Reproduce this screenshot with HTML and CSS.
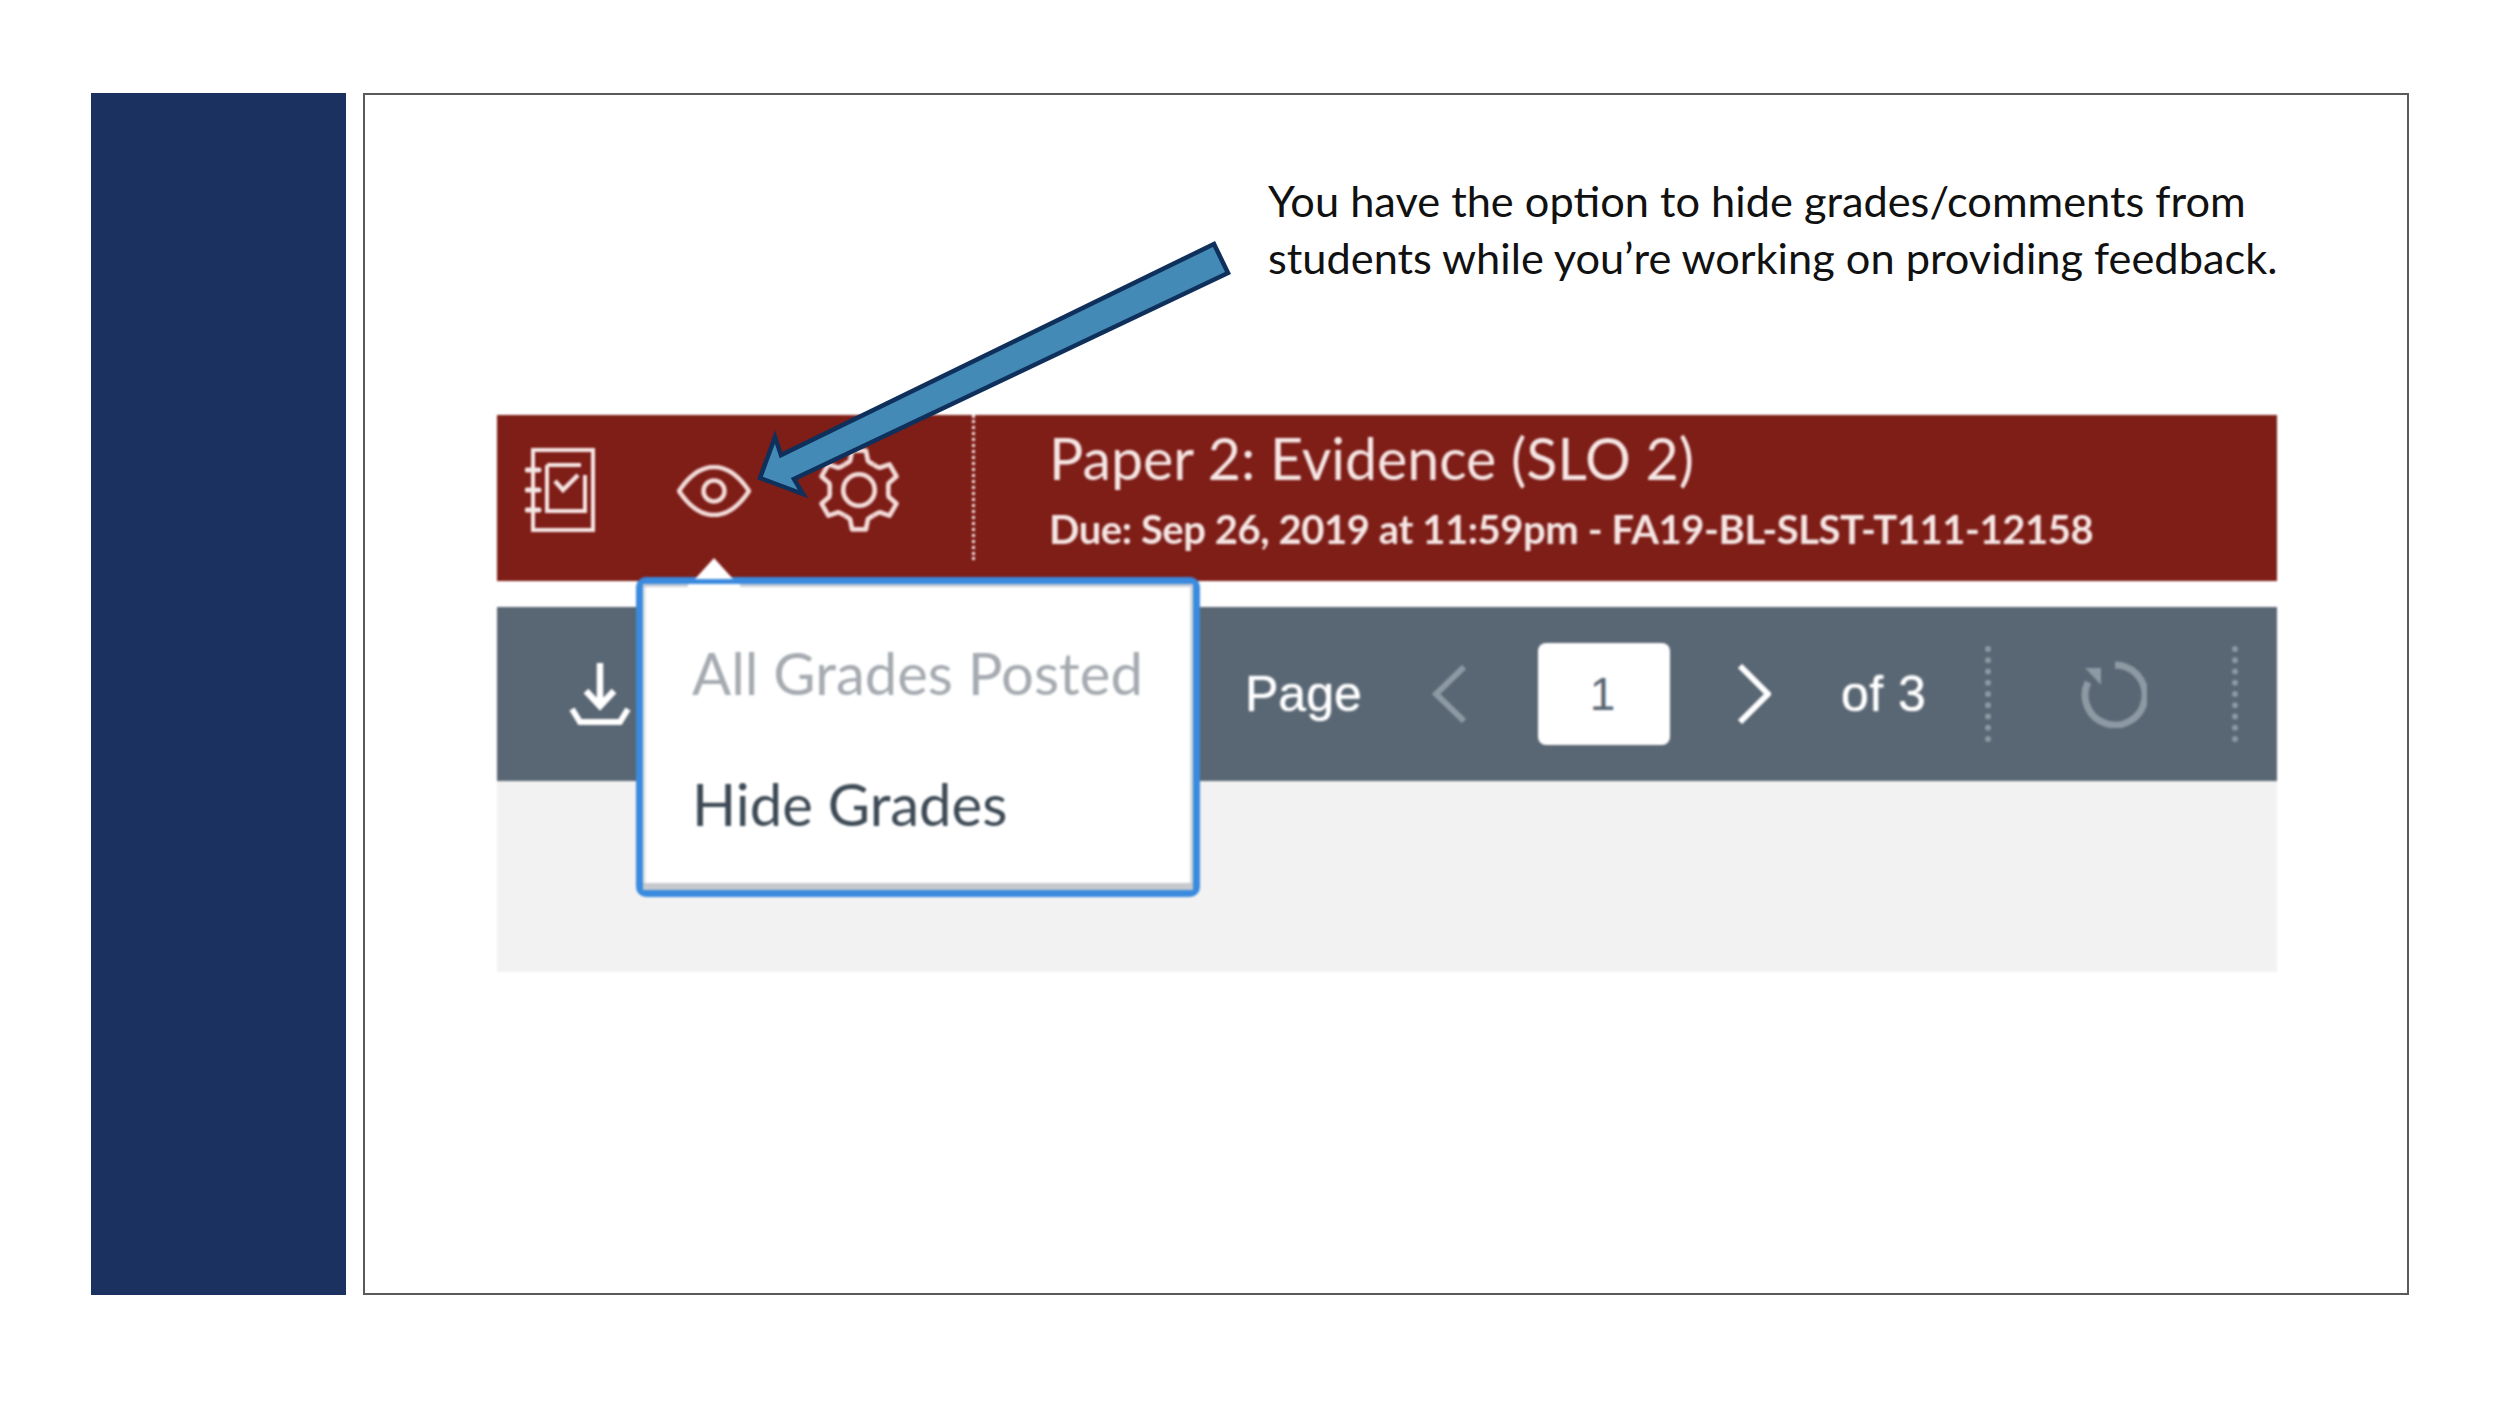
FILE: index.html
```html
<!DOCTYPE html>
<html lang="en">
<head>
<meta charset="utf-8">
<title>Hide grades</title>
<link rel="stylesheet" href="styles.css">
</head>
<body>
<main class="slide">
  <aside class="sidebar"></aside>
  <section class="panel">
    <p class="caption">You have the option to hide grades/comments from<br>students while you’re working on providing feedback.</p>
    <div class="screen">
      <div class="shot">
        <header class="redbar">
          <svg class="ico-book" viewBox="0 0 72 84" fill="none" stroke="#f6e6e4" stroke-width="4">
            <path d="M8 2h60v80H8z"/>
            <path d="M2 22h12M2 42h12M2 62h12" stroke-linecap="round" stroke-width="5"/>
            <path d="M22 17h34M22 17v46h38V27"/>
            <path d="M30 33l8 9 15-15" stroke-width="4.5"/>
          </svg>
          <svg class="ico-eye" viewBox="0 0 74 52" fill="none" stroke="#f3dcd9" stroke-width="4.5">
            <path d="M2 26C14 8 26 2 37 2s23 6 35 24C60 44 48 50 37 50S14 44 2 26z"/>
            <circle cx="37" cy="26" r="10.5"/>
          </svg>
          <svg class="ico-gear" viewBox="0 0 80 80" fill="none" stroke="#f3dcd9" stroke-width="4.5" stroke-linejoin="round">
            <g>
              <path d="M26 15.75Q30 14 31.5 12.3L33.4 2.6H46.6L48.5 12.3Q50 14 54 15.75"/>
              <path transform="rotate(60 40 40)" d="M26 15.75Q30 14 31.5 12.3L33.4 2.6H46.6L48.5 12.3Q50 14 54 15.75"/>
              <path transform="rotate(120 40 40)" d="M26 15.75Q30 14 31.5 12.3L33.4 2.6H46.6L48.5 12.3Q50 14 54 15.75"/>
              <path transform="rotate(180 40 40)" d="M26 15.75Q30 14 31.5 12.3L33.4 2.6H46.6L48.5 12.3Q50 14 54 15.75"/>
              <path transform="rotate(240 40 40)" d="M26 15.75Q30 14 31.5 12.3L33.4 2.6H46.6L48.5 12.3Q50 14 54 15.75"/>
              <path transform="rotate(300 40 40)" d="M26 15.75Q30 14 31.5 12.3L33.4 2.6H46.6L48.5 12.3Q50 14 54 15.75"/>
            </g>
            <circle cx="40" cy="40" r="15"/>
          </svg>
          <div class="vrule vrule-red"></div>
          <div class="titles">
            <h1 class="title">Paper 2: Evidence (SLO 2)</h1>
            <p class="due">Due: Sep 26, 2019 at 11:59pm - FA19-BL-SLST-T111-12158</p>
          </div>
        </header>
        <nav class="graybar">
          <svg class="ico-download" viewBox="0 0 62 64" fill="none" stroke="#fff" stroke-width="6.5">
            <path d="M31 1v42M17 29l14 15 14-15"/>
            <path d="M3 47l8 13h40l8-13" stroke-width="6"/>
          </svg>
          <span class="label label-page">Page</span>
          <svg class="chev chev-left" viewBox="0 0 34 58" fill="none" stroke="#8d99a3" stroke-width="6"><path d="M32 2L4 29l28 27"/></svg>
          <div class="page-input">1</div>
          <svg class="chev chev-right" viewBox="0 0 34 60" fill="none" stroke="#fff" stroke-width="6"><path d="M3 2l28 28L3 58"/></svg>
          <span class="label label-of">of 3</span>
          <div class="vrule vrule-gray first-rule"></div>
          <svg class="ico-refresh" viewBox="0 0 68 68" fill="none" stroke="#8d99a3" stroke-width="7">
            <path d="M36 5a30 30 0 1 1-27 17"/>
            <path d="M6 8h16v17z" fill="#8d99a3" stroke="none"/>
          </svg>
          <div class="vrule vrule-gray second-rule"></div>
        </nav>
        <div class="lightarea"></div>
        <div class="popup">
          <span class="notch"></span>
          <div class="popup-body">
            <div class="menu-item muted">All Grades Posted</div>
            <div class="menu-item">Hide Grades</div>
          </div>
        </div>
      </div>
      <svg class="arrow" viewBox="0 0 482 260">
        <path d="M10 238L25 197L31 215L464 4L478 33L44 239L53 254Z" fill="#438ab7" stroke="#10305c" stroke-width="4.5" stroke-linejoin="miter"/>
      </svg>
    </div>
  </section>
</main>
</body>
</html>
```

FILE: styles.css
```css
* { box-sizing: border-box; }
html, body { margin: 0; padding: 0; background: #fff; }
body { width: 2500px; height: 1406px; overflow: hidden; }
.slide { display: flex; align-items: stretch; gap: 17px; height: 1295px; padding: 93px 0 0 91px; }
.sidebar { width: 255px; background: #1b3260; }
.panel { width: 2046px; border: 2px solid #5a5a5a; padding: 77px 0 0 132px; background: #fff; }
.caption { margin: 0 0 0 771px; height: 243px; font: 400 43.35px/57px "Lato", sans-serif; color: #111; white-space: nowrap; }
.screen { position: relative; width: 1780px; height: 557px; }
.shot { position: relative; display: flex; flex-direction: column; height: 100%; filter: blur(.9px); }
.redbar { display: flex; align-items: flex-start; height: 166px; background: #7f1d17; color: #f5e6e4; }
.ico-book { width: 72px; height: 84px; margin: 33px 0 0 28px; }
.ico-eye { width: 74px; height: 52px; margin: 50px 0 0 79.5px; }
.ico-gear { width: 84px; height: 84px; margin: 33px 0 0 66px; }
.vrule { border-left: 3px dotted #f5e6e4; }
.vrule-red { height: 145px; margin-left: 71.5px; }
.titles { margin-left: 74px; }
.title { margin: 11px 0 0; font: 400 57.3px/64px "Lato", sans-serif; }
.due { margin: 16px 0 0; font: 700 40px/46px "Lato", sans-serif; letter-spacing: -.44px; white-space: nowrap; }
.graybar { display: flex; align-items: center; height: 174px; margin-top: 26px; background: #596673; color: #fff; }
.ico-download { width: 62px; height: 64px; margin: 0 0 0 72px; }
.label { font: 400 50px/60px "Liberation Sans", sans-serif; text-shadow: 0 0 1.5px #fff; }
.label-page { margin-left: 614px; width: 117px; }
.chev { flex: none; }
.chev-left { width: 34px; height: 58px; margin-left: 70px; }
.page-input { width: 132px; height: 102px; margin-left: 72px; border-radius: 8px; background: #fff; color: #596673; font: 400 46px/102px "Liberation Sans", sans-serif; text-align: center; padding-right: 3px; }
.chev-right { width: 34px; height: 60px; margin-left: 67px; }
.label-of { margin-left: 70px; white-space: nowrap; letter-spacing: .5px; }
.vrule-gray { height: 96px; border-left: 6px dotted #8d99a3; }
.first-rule { margin-left: 59px; }
.ico-refresh { width: 68px; height: 68px; margin-left: 88px; }
.second-rule { margin-left: 85px; }
.lightarea { flex: 1; background: #f2f2f2; }
.popup { position: absolute; left: 139px; top: 162px; width: 564px; height: 320px; border: 7px solid #3a8ade; border-radius: 10px; background: #fff; }
.notch { position: absolute; left: 52px; top: -26px; width: 0; height: 0; border-left: 19px solid transparent; border-right: 19px solid transparent; border-bottom: 21px solid #fff; }
.notch::after { content: ""; position: absolute; left: -26px; top: 26px; width: 52px; height: 8px; background: #fff; }
.popup-body { height: 100%; padding-top: 57px; box-shadow: inset 0 3px 0 #c9ced6, inset 0 -7px 0 #c6c9cd, inset -3px 0 0 #d5d8db, inset 3px 0 0 #e3e5e8; }
.menu-item { margin-left: 49px; font: 400 58px/64px "Lato", sans-serif; color: #3d4a55; }
.menu-item.muted { margin-bottom: 67px; color: #a6abb1; }
.arrow { position: absolute; left: 253px; top: -175px; width: 482px; height: 260px; }
```
